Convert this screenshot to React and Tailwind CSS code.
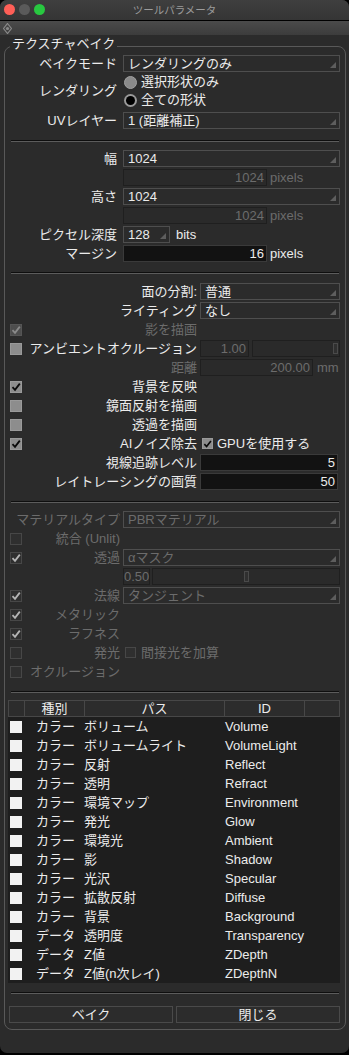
import React from "react";

const FONT = "font-['Liberation_Sans','Noto_Sans_CJK_JP',sans-serif]";
const ON = "text-[#ececec]";
const OFF = "text-[#6c6c6c]";

function Tri() {
  return (
    <svg className="absolute right-[3px] bottom-[3px]" width="6" height="6" viewBox="0 0 6 6">
      <path d="M6 0 L6 6 L0 6 Z" fill="#5e5e5e" />
    </svg>
  );
}

function Select({ value, className = "flex-1", dim }) {
  return (
    <div className={`relative flex h-[17px] items-center border border-[#4e4e4e] bg-[#2b2b2b] pl-[4px] ${className} ${dim ? OFF : ON}`}>
      <span className="whitespace-nowrap">{value}</span>
      <Tri />
    </div>
  );
}

function Field({ value, className = "flex-1", dark, dim }) {
  return (
    <div
      className={`flex h-[17px] items-center justify-end border pr-[2px] ${className} ${
        dark ? "border-[#3a3a3a] bg-[#121212]" : "border-[#1f1f1f] bg-[#2a2a2a]"
      } ${dim ? OFF : ON}`}
    >
      {value}
    </div>
  );
}

function Slider({ thumb }) {
  return (
    <div className="relative h-[17px] flex-1 border border-[#1f1f1f] bg-[#2a2a2a]">
      <div className={`absolute top-[2px] h-[11px] w-[5px] border border-[#4a4a4a] bg-[#303030] ${thumb}`} />
    </div>
  );
}

function Check({ checked, kind = "on", small }) {
  const box =
    kind === "on"
      ? "bg-[#8d8d8d] border-[#9a9a9a]"
      : kind === "dim"
      ? "bg-[#4d4d4d] border-[#555]"
      : "bg-[#2f2f2f] border-[#474747]";
  const mark = kind === "on" ? "#0a0a0a" : kind === "dim" ? "#8a8a8a" : "#b5b5b5";
  return (
    <div className={`flex items-center justify-center border ${small ? "h-[11px] w-[11px]" : "h-[12px] w-[12px]"} ${box}`}>
      {checked && (
        <svg width="10" height="10" viewBox="0 0 10 10">
          <path d="M1.5 5.2 L4 7.8 L8.8 1.6" fill="none" stroke={mark} strokeWidth="1.8" />
        </svg>
      )}
    </div>
  );
}

function Radio({ on }) {
  return on ? (
    <div className="flex h-[13px] w-[13px] items-center justify-center rounded-full bg-[#9a9a9a]">
      <div className="h-[9px] w-[9px] rounded-full bg-black" />
    </div>
  ) : (
    <div className="h-[13px] w-[13px] rounded-full border border-[#a0a0a0] bg-[#8a8a8a]" />
  );
}

function Row({ lw, check, label, dim, children }) {
  return (
    <div className="flex h-[19px] items-center">
      <div className={`flex h-full shrink-0 items-center ${lw}`}>
        {check && <div className="pl-[2px]">{check}</div>}
        <span className={`ml-auto whitespace-nowrap ${dim ? OFF : ON}`}>{label}</span>
      </div>
      <div className="flex min-w-0 flex-1 items-center">{children}</div>
    </div>
  );
}

function Sep({ className }) {
  return <div className={`ml-[3px] mr-[1px] h-[2px] border-t border-b border-t-[#0e0e0e] border-b-[#5c5c5c] ${className}`} />;
}

const L1 = "w-[115px] pr-[6px]";
const L2 = "w-[192px] pr-[3px]";
const L3 = "w-[115px] pr-[3px]";

const passes = [
  ["カラー", "ボリューム", "Volume"],
  ["カラー", "ボリュームライト", "VolumeLight"],
  ["カラー", "反射", "Reflect"],
  ["カラー", "透明", "Refract"],
  ["カラー", "環境マップ", "Environment"],
  ["カラー", "発光", "Glow"],
  ["カラー", "環境光", "Ambient"],
  ["カラー", "影", "Shadow"],
  ["カラー", "光沢", "Specular"],
  ["カラー", "拡散反射", "Diffuse"],
  ["カラー", "背景", "Background"],
  ["データ", "透明度", "Transparency"],
  ["データ", "Z値", "ZDepth"],
  ["データ", "Z値(n次レイ)", "ZDepthN"],
];

export default function App() {
  return (
    <div className={`h-[1055px] w-[349px] bg-black text-[13px] leading-[16px] ${FONT}`}>
      <div className="flex h-[1053px] flex-col overflow-hidden rounded-[7px] bg-[#2b2b2b]">
        {/* title bar */}
        <div className="relative flex h-[21px] shrink-0 items-center justify-center border-b border-black bg-gradient-to-b from-[#3f3f3f] to-[#353535]">
          <div className="absolute left-[4px] top-[4px] flex gap-[4px]">
            <div className="h-[11px] w-[11px] rounded-full bg-[#ff5f57]" />
            <div className="h-[11px] w-[11px] rounded-full bg-[#5a5a5a]" />
            <div className="h-[11px] w-[11px] rounded-full bg-[#28c840]" />
          </div>
          <span className="text-[10.5px] text-[#9c9c9c]">ツールパラメータ</span>
        </div>
        {/* toolbar */}
        <div className="flex h-[14px] shrink-0 items-center bg-gradient-to-b from-[#4b4b4b] to-[#3c3c3c] pl-[3px]">
          <svg width="9" height="11" viewBox="0 0 9 11">
            <path d="M4.5 0.5 L8.5 5.5 L4.5 10.5 L0.5 5.5 Z" fill="none" stroke="#8a8a8a" strokeWidth="1.2" />
            <circle cx="4.5" cy="5.5" r="1.6" fill="#8a8a8a" />
          </svg>
        </div>

        {/* group box */}
        <div className="relative ml-[4px] mt-[11px] w-[342px] rounded-[8px] border border-[#595959] pb-[6px] pl-[3px] pr-[5px] pt-[7px]">
          <span className={`absolute left-[5px] top-[-11px] bg-[#2b2b2b] px-[2px] ${ON}`}>テクスチャベイク</span>

          <Row lw={L1} label="ベイクモード">
            <Select value="レンダリングのみ" />
          </Row>
          <div className="flex">
            <div className={`flex items-center justify-end ${L1} ${ON}`}>レンダリング</div>
            <div className="flex flex-col">
              <div className="flex h-[18px] items-center gap-[4px] pl-[1px]">
                <Radio />
                <span className={ON}>選択形状のみ</span>
              </div>
              <div className="flex h-[18px] items-center gap-[4px] pl-[1px]">
                <Radio on />
                <span className={ON}>全ての形状</span>
              </div>
            </div>
          </div>
          <div className="mt-[2px]">
            <Row lw={L1} label="UVレイヤー">
              <Select value="1 (距離補正)" />
            </Row>
          </div>

          <Sep className="mb-[7px] mt-[10px]" />

          <Row lw={L1} label="幅">
            <Select value="1024" />
          </Row>
          <Row lw={L1}>
            <Field value="1024" className="w-[144px]" dim />
            <span className={`ml-[3px] ${OFF}`}>pixels</span>
          </Row>
          <Row lw={L1} label="高さ">
            <Select value="1024" />
          </Row>
          <Row lw={L1}>
            <Field value="1024" className="w-[144px]" dim />
            <span className={`ml-[3px] ${OFF}`}>pixels</span>
          </Row>
          <Row lw={L1} label="ピクセル深度">
            <Select value="128" className="w-[47px]" />
            <span className={`ml-[6px] ${ON}`}>bits</span>
          </Row>
          <Row lw={L1} label="マージン">
            <Field value="16" className="w-[144px]" dark />
            <span className={`ml-[3px] ${ON}`}>pixels</span>
          </Row>

          <Sep className="mb-[8px] mt-[9px]" />

          <Row lw={L2} label="面の分割:">
            <Select value="普通" />
          </Row>
          <Row lw={L2} label="ライティング">
            <Select value="なし" />
          </Row>
          <Row lw={L2} label="影を描画" dim check={<Check checked kind="dim" />} />
          <Row lw={L2} label="アンビエントオクルージョン" check={<Check />}>
            <Field value="1.00" className="w-[49px]" dim />
            <div className="w-[3px]" />
            <Slider thumb="right-[1px]" />
          </Row>
          <Row lw={L2} label="距離" dim>
            <Field value="200.00" className="w-[113px]" dim />
            <span className={`ml-[4px] ${OFF}`}>mm</span>
          </Row>
          <Row lw={L2} label="背景を反映" check={<Check checked />} />
          <Row lw={L2} label="鏡面反射を描画" check={<Check />} />
          <Row lw={L2} label="透過を描画" check={<Check />} />
          <Row lw={L2} label="AIノイズ除去" check={<Check checked />}>
            <div className="ml-[2px]">
              <Check checked small />
            </div>
            <span className={`ml-[4px] ${ON}`}>GPUを使用する</span>
          </Row>
          <Row lw={L2} label="視線追跡レベル">
            <Field value="5" className="w-[138px]" dark />
          </Row>
          <Row lw={L2} label="レイトレーシングの画質">
            <Field value="50" className="w-[138px]" dark />
          </Row>

          <Sep className="mb-[7px] mt-[10px]" />

          <Row lw={L3} label="マテリアルタイプ" dim>
            <Select value="PBRマテリアル" dim />
          </Row>
          <Row lw={L3} label="統合 (Unlit)" dim check={<Check kind="off" />} />
          <Row lw={L3} label="透過" dim check={<Check checked kind="off" />}>
            <Select value="αマスク" dim />
          </Row>
          <Row lw={L3}>
            <div className={`flex h-[17px] w-[27px] items-center border border-[#1f1f1f] bg-[#2a2a2a] ${OFF}`}>0.50</div>
            <div className="w-[2px]" />
            <Slider thumb="left-[91px]" />
          </Row>
          <Row lw={L3} label="法線" dim check={<Check checked kind="off" />}>
            <Select value="タンジェント" dim />
          </Row>
          <Row lw={L3} label="メタリック" dim check={<Check checked kind="off" />} />
          <Row lw={L3} label="ラフネス" dim check={<Check checked kind="off" />} />
          <Row lw={L3} label="発光" dim check={<Check kind="off" />}>
            <div className="ml-[2px]">
              <Check kind="off" small />
            </div>
            <span className={`ml-[5px] ${OFF}`}>間接光を加算</span>
          </Row>
          <Row lw={L3} label="オクルージョン" dim check={<Check kind="off" />} />

          <Sep className="mb-[7px] mt-[10px]" />

          {/* pass table */}
          <div className="bg-[#1e1e1e]">
            <div className={`grid h-[17px] grid-cols-[15px_60px_140px_80px_37px] border border-[#474747] bg-[#2c2c2c] ${ON}`}>
              <div />
              <div className="flex items-center justify-center border-l border-[#474747]">種別</div>
              <div className="flex items-center justify-center border-l border-[#474747]">パス</div>
              <div className="flex items-center justify-center border-l border-[#474747]">ID</div>
              <div className="border-l border-[#474747]" />
            </div>
            {passes.map(([kind, name, id]) => (
              <div key={id} className={`grid h-[19px] grid-cols-[15px_60px_140px_80px_37px] items-center ${ON}`}>
                <div className="pl-[2px]">
                  <div className="h-[12px] w-[12px] bg-[#f2f2f2]" />
                </div>
                <div className="pl-[13px] whitespace-nowrap">{kind}</div>
                <div className="pl-[1px] whitespace-nowrap">{name}</div>
                <div className="pl-[2px] whitespace-nowrap">{id}</div>
                <div />
              </div>
            ))}
          </div>

          <Sep className="mb-[12px] mt-[9px]" />

          <div className="flex gap-[3px] pl-[1px]">
            <button className={`h-[17px] flex-1 border border-[#4a4a4a] bg-[#2c2c2c] ${ON}`}>ベイク</button>
            <button className={`h-[17px] flex-1 border border-[#4a4a4a] bg-[#2c2c2c] ${ON}`}>閉じる</button>
          </div>
        </div>
      </div>
    </div>
  );
}
